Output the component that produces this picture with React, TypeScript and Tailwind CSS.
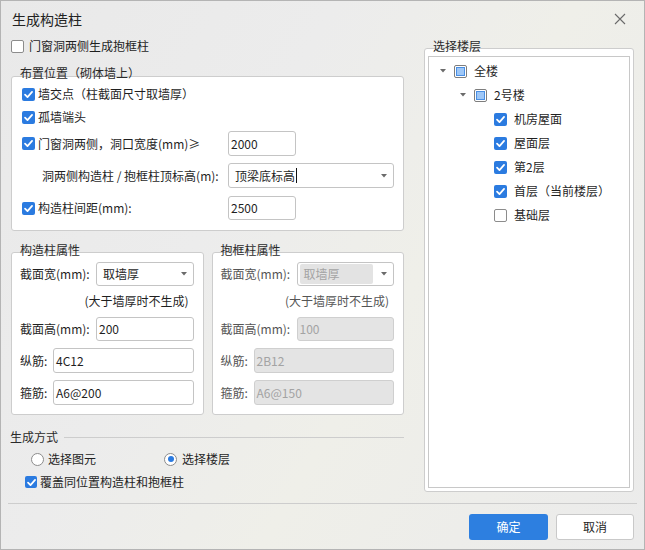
import type { ReactNode } from "react";

const floors = [
  { label: "机房屋面", checked: true },
  { label: "屋面层", checked: true },
  { label: "第2层", checked: true },
  { label: "首层（当前楼层）", checked: true },
  { label: "基础层", checked: false },
];

function CheckBox({ checked, small }: { checked?: boolean; small?: boolean }) {
  const size = small ? "h-[12px] w-[12px]" : "h-[13px] w-[13px]";
  if (!checked) {
    return <span className={`${size} block shrink-0 rounded-[2px] border border-[#8c8c8c] bg-white`} />;
  }
  return (
    <span className={`${size} flex shrink-0 items-center justify-center rounded-[2px] bg-[#2b7be0]`}>
      <svg viewBox="0 0 12 12" className="h-[11px] w-[11px]">
        <path d="M2.2 6.2 L4.9 8.9 L9.9 3.1" fill="none" stroke="white" strokeWidth="1.9" strokeLinecap="round" strokeLinejoin="round" />
      </svg>
    </span>
  );
}

function PartialBox() {
  return (
    <span className="flex h-[13px] w-[13px] shrink-0 items-center justify-center rounded-[2px] border border-[#7d7d7d] bg-white">
      <span className="h-[9px] w-[9px] border border-[#4a8fe3] bg-[#9ec7f7]" />
    </span>
  );
}

function Radio({ checked }: { checked?: boolean }) {
  return (
    <span className="flex h-[13px] w-[13px] shrink-0 items-center justify-center rounded-full border border-[#8c8c8c] bg-white">
      {checked && <span className="h-[6px] w-[6px] rounded-full bg-[#2b7be0]" />}
    </span>
  );
}

function Caret() {
  return (
    <svg viewBox="0 0 6 4" className="h-[4px] w-[6px] shrink-0">
      <path d="M0 0 H6 L3 3.5 Z" fill="#6b6b6b" />
    </svg>
  );
}

function Input({ value, width, disabled }: { value: string; width: string; disabled?: boolean }) {
  return (
    <div
      className={`flex h-full ${width} items-center rounded-[3px] border px-[2px] ${
        disabled ? "border-[#cfcfcf] bg-[#e4e4e4] text-[#a3a3a3]" : "border-[#c4c4c4] bg-white"
      }`}
    >
      {value}
    </div>
  );
}

function Select({ value, width, disabled, cursor }: { value: string; width: string; disabled?: boolean; cursor?: boolean }) {
  return (
    <div className={`flex h-full ${width} items-center rounded-[3px] border border-[#c4c4c4] bg-white pr-[6px]`}>
      {disabled ? (
        <div className="ml-[2px] mr-[8px] flex h-[20px] flex-1 items-center rounded-[2px] bg-[#e3e3e3] pl-[4px] text-[#a3a3a3]">
          {value}
        </div>
      ) : (
        <div className="flex flex-1 items-center pl-[6px]">
          {value}
          {cursor && <span className="ml-[1px] h-[15px] w-px bg-[#111]" />}
        </div>
      )}
      <Caret />
    </div>
  );
}

function GroupTitle({ children, mb }: { children: ReactNode; mb: string }) {
  return (
    <div className={`relative z-10 ml-[9px] h-[16px] w-fit leading-[16px] text-[#2a2a2a] ${mb}`}>{children}</div>
  );
}

function PropGroup({ title, disabled, values }: { title: string; disabled?: boolean; values: string[] }) {
  const label = disabled ? "text-[#555]" : "";
  return (
    <div className="flex flex-1 flex-col">
      <GroupTitle mb="-mb-[6px]">{title}</GroupTitle>
      <div className="flex h-[163px] flex-col rounded-[3px] border border-[#cdcdcd] bg-white pl-[8px] pr-[9px] pt-[9px]">
        <div className="flex h-[24px] items-center">
          <span className={`w-[76px] shrink-0 ${label}`}>截面宽(mm):</span>
          <Select value={values[0]} width="flex-1" disabled={disabled} />
        </div>
        <div className={`mt-[7px] flex h-[16px] items-center justify-end pr-[5px] leading-[16px] ${label}`}>
          (大于墙厚时不生成)
        </div>
        <div className="mt-[8px] flex h-[24px] items-center">
          <span className={`w-[76px] shrink-0 ${label}`}>截面高(mm):</span>
          <Input value={values[1]} width="flex-1" disabled={disabled} />
        </div>
        <div className="mt-[7px] flex h-[25px] items-center">
          <span className={`w-[33px] shrink-0 ${label}`}>纵筋:</span>
          <Input value={values[2]} width="flex-1" disabled={disabled} />
        </div>
        <div className="mt-[7px] flex h-[25px] items-center">
          <span className={`w-[33px] shrink-0 ${label}`}>箍筋:</span>
          <Input value={values[3]} width="flex-1" disabled={disabled} />
        </div>
      </div>
    </div>
  );
}

function TreeRow({ level, arrow, box, label }: { level: number; arrow?: boolean; box: ReactNode; label: string }) {
  const pad = level === 0 ? "pl-[7px]" : level === 1 ? "pl-[27px]" : "pl-[47px]";
  return (
    <div className={`flex h-[24px] items-center ${pad}`}>
      <span className="flex w-[13px] justify-center">{arrow && <Caret />}</span>
      <span className="ml-[5px] flex">{box}</span>
      <span className="ml-[7px]">{label}</span>
    </div>
  );
}

export default function App() {
  return (
    <div className="flex h-[550px] w-[645px] flex-col border border-[#b4b4b4] bg-[linear-gradient(120deg,#e9e9e9_0%,#ececec_35%,#efefe9_60%,#ebebeb_100%)] font-['Noto_Sans_CJK_SC','Microsoft_YaHei',sans-serif] text-[12px] leading-[16px] text-[#1f1f1f]">
      <div className="flex h-[36px] shrink-0 items-center justify-between pl-[11px] pr-[18px]">
        <span className="text-[14px] text-[#222]">生成构造柱</span>
        <svg viewBox="0 0 12 12" className="h-[12px] w-[12px]">
          <path d="M1 1 L11 11 M11 1 L1 11" stroke="#6a6a6a" strokeWidth="1.1" />
        </svg>
      </div>

      <div className="flex h-[455px] shrink-0 gap-[20px] pl-[10px]">
        <div className="flex w-[393px] flex-col">
          <div className="flex h-[18px] items-center gap-[5px]">
            <CheckBox />
            <span>门窗洞两侧生成抱框柱</span>
          </div>

          <div className="mt-[10px]">
            <GroupTitle mb="-mb-[5px]">布置位置（砌体墙上）</GroupTitle>
          </div>
          <div className="flex h-[155px] flex-col rounded-[3px] border border-[#cdcdcd] bg-white pl-[10px] pt-[8px]">
            <div className="flex h-[18px] items-center gap-[3px]">
              <CheckBox checked />
              <span>墙交点（柱截面尺寸取墙厚）</span>
            </div>
            <div className="mt-[5px] flex h-[18px] items-center gap-[3px]">
              <CheckBox checked />
              <span>孤墙端头</span>
            </div>
            <div className="mt-[5px] flex h-[25px] items-center">
              <div className="flex w-[206px] shrink-0 items-center gap-[3px]">
                <CheckBox checked />
                <span>门窗洞两侧，洞口宽度(mm)≥</span>
              </div>
              <Input value="2000" width="w-[68px]" />
            </div>
            <div className="mt-[7px] flex h-[25px] items-center">
              <span className="w-[206px] shrink-0 pl-[20px]">洞两侧构造柱 / 抱框柱顶标高(m):</span>
              <Select value="顶梁底标高" width="w-[166px]" cursor />
            </div>
            <div className="mt-[8px] flex h-[24px] items-center">
              <div className="flex w-[206px] shrink-0 items-center gap-[3px]">
                <CheckBox checked />
                <span>构造柱间距(mm):</span>
              </div>
              <Input value="2500" width="w-[68px]" />
            </div>
          </div>

          <div className="mt-[11px] flex gap-[8px]">
            <PropGroup title="构造柱属性" values={["取墙厚", "200", "4C12", "A6@200"]} />
            <PropGroup title="抱框柱属性" disabled values={["取墙厚", "100", "2B12", "A6@150"]} />
          </div>

          <div className="mt-[14px] flex h-[16px] items-center">
            <span className="-ml-[1px] text-[#2a2a2a]">生成方式</span>
            <span className="ml-[6px] h-px flex-1 bg-[#cdcdcd]" />
          </div>
          <div className="mt-[6px] flex h-[16px] items-center pl-[20px]">
            <div className="flex w-[133px] items-center gap-[4px]">
              <Radio />
              <span>选择图元</span>
            </div>
            <div className="flex items-center gap-[5px]">
              <Radio checked />
              <span>选择楼层</span>
            </div>
          </div>
          <div className="mt-[7px] flex h-[16px] items-center gap-[3px] pl-[14px]">
            <CheckBox checked small />
            <span>覆盖同位置构造柱和抱框柱</span>
          </div>
        </div>

        <div className="flex w-[210px] flex-col">
          <div className="mt-[1px]">
            <GroupTitle mb="-mb-[6px]">选择楼层</GroupTitle>
          </div>
          <div className="flex flex-1 flex-col rounded-[3px] border border-[#cdcdcd] bg-white px-[3px] pb-[3px] pt-[7px]">
            <div className="flex-1 border border-[#c8c8c8] pt-[2px]">
              <TreeRow level={0} arrow box={<PartialBox />} label="全楼" />
              <TreeRow level={1} arrow box={<PartialBox />} label="2号楼" />
              {floors.map((f) => (
                <TreeRow key={f.label} level={2} box={<CheckBox checked={f.checked} />} label={f.label} />
              ))}
            </div>
          </div>
        </div>
      </div>

      <div className="mx-[7px] mt-[11px] h-px shrink-0 bg-[#cdcdcd]" />
      <div className="mt-[10px] flex justify-end gap-[8px] pr-[10px]">
        <button className="h-[26px] w-[79px] rounded-[3px] bg-[#2d7fe0] text-[12px] text-white">确定</button>
        <button className="h-[26px] w-[78px] rounded-[3px] border border-[#c9c9c9] bg-white text-[12px] text-[#1f1f1f]">
          取消
        </button>
      </div>
    </div>
  );
}
